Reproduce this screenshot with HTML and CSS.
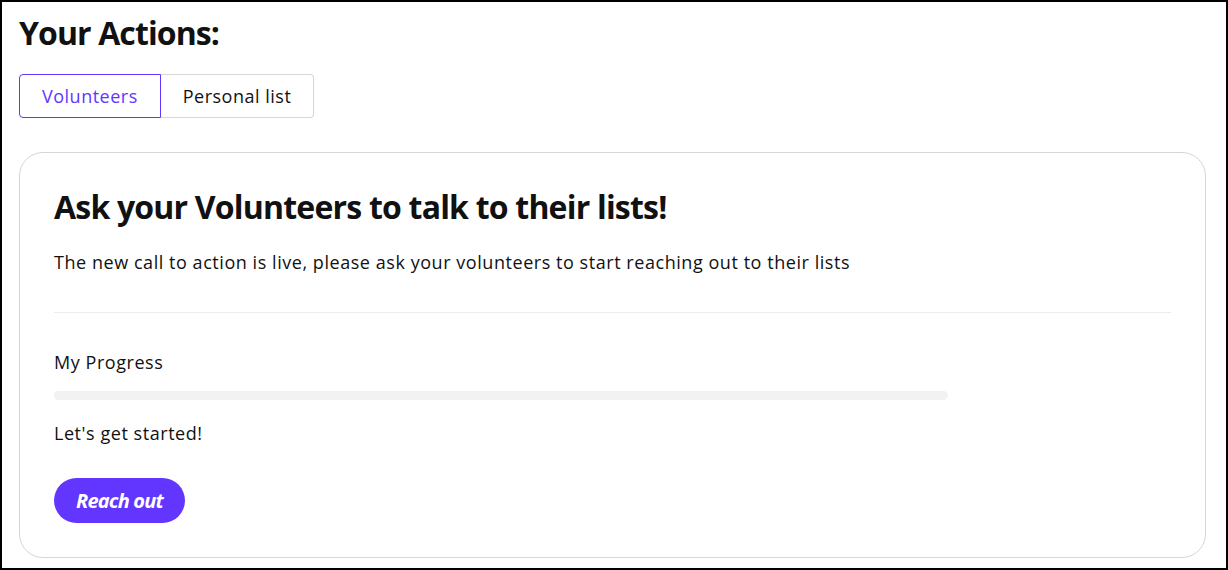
FILE: index.html
```html
<!DOCTYPE html>
<html lang="en">
<head>
    <meta charset="UTF-8">
    <meta name="viewport" content="width=device-width, initial-scale=1.0">
    <title>Your Actions</title>
    <link rel="stylesheet" href="styles.css">
</head>
<body>
    <div class="page">
        <h1 class="page-title">Your Actions:</h1>

        <div class="tabs">
            <button class="tab active">Volunteers</button>
            <button class="tab">Personal list</button>
        </div>

        <div class="card">
            <h2 class="card-title">Ask your Volunteers to talk to their lists!</h2>
            <p class="card-text">The new call to action is live, please ask your volunteers to start reaching out to their lists</p>
            <hr class="divider">
            <p class="progress-label">My Progress</p>
            <div class="progress">
                <div class="progress-fill" style="width: 0%"></div>
            </div>
            <p class="progress-status">Let's get started!</p>
            <button class="reach-button">Reach out</button>
        </div>
    </div>
</body>
</html>
```

FILE: styles.css
```css
html, body {
    margin: 0;
    padding: 0;
}
body {
    font-family: "Open Sans", "Noto Sans", sans-serif;
    color: #111;
    background: #fff;
}
.page {
    box-sizing: border-box;
    height: 570px;
    border: 2px solid #000;
    padding: 11px 20px 0 17px;
}
.page-title {
    margin: 0;
    font-size: 32px;
    line-height: 40px;
    font-weight: 700;
    letter-spacing: -0.9px;
}
.tabs {
    display: flex;
    margin-top: 21px;
}
.tab {
    font-family: inherit;
    font-size: 18px;
    line-height: 24px;
    letter-spacing: 0.5px;
    padding: 9px 22px;
    background: #fff;
    color: #111;
    border: 1px solid #d6d6d6;
    cursor: pointer;
}
.tab:first-child {
    border-radius: 4px 0 0 4px;
}
.tab:last-child {
    border-radius: 0 4px 4px 0;
    border-left: none;
}
.tab.active {
    color: #6236ff;
    border-color: #6236ff;
}
.card {
    margin-top: 34px;
    border: 1px solid #d6d6d6;
    border-radius: 24px;
    padding: 34px;
}
.card-title {
    margin: 0;
    font-size: 32px;
    line-height: 40px;
    font-weight: 700;
    letter-spacing: -0.8px;
}
.card-text,
.progress-label,
.progress-status {
    margin: 0;
    font-size: 18px;
    line-height: 27px;
    letter-spacing: 0.55px;
}
.card-text {
    margin-top: 22px;
}
.divider {
    margin: 36px 0 0;
    border: none;
    border-top: 1px solid #ececec;
}
.progress-label {
    margin-top: 36px;
}
.progress {
    width: 80%;
    height: 9px;
    margin-top: 15px;
    border-radius: 5px;
    background: #f2f2f2;
    overflow: hidden;
}
.progress-fill {
    height: 100%;
    background: #6236ff;
}
.progress-status {
    margin-top: 20px;
}
.reach-button {
    display: block;
    margin-top: 31px;
    height: 45px;
    padding: 0 22px;
    border: none;
    border-radius: 23px;
    background: #6236ff;
    color: #fff;
    font-family: inherit;
    font-size: 20px;
    font-weight: 700;
    font-style: italic;
    letter-spacing: -0.8px;
    cursor: pointer;
}
```
